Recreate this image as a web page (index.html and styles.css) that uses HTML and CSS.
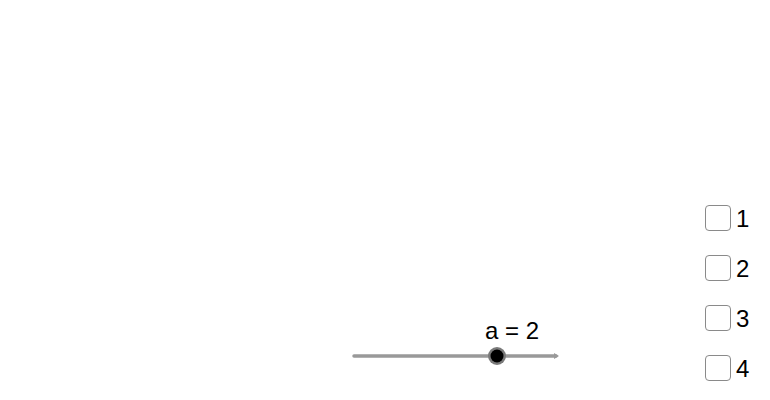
FILE: index.html
```html
<!DOCTYPE html>
<html>
<head>
<meta charset="utf-8">
<link rel="stylesheet" href="styles.css">
</head>
<body>
<div class="canvas">
  <div class="slider">
    <div class="slider-label">a = 2</div>
    <svg class="slider-track" width="220" height="20" viewBox="0 0 220 20">
      <line x1="2" y1="10" x2="204" y2="10" stroke="#999" stroke-width="3.5" stroke-linecap="round"/>
      <path d="M202 7 L207 10 L202 13 Z" fill="#999"/>
      <circle cx="145" cy="10" r="9" fill="#7a7a7a"/>
      <circle cx="145" cy="10" r="6.5" fill="#000"/>
    </svg>
  </div>
  <ul class="checks">
    <li class="check"><span class="box"></span><span class="lbl">1</span></li>
    <li class="check"><span class="box"></span><span class="lbl">2</span></li>
    <li class="check"><span class="box"></span><span class="lbl">3</span></li>
    <li class="check"><span class="box"></span><span class="lbl">4</span></li>
  </ul>
</div>
</body>
</html>
```
FILE: styles.css
```css
html, body {
  margin: 0;
  padding: 0;
  background: #fff;
}
.canvas {
  position: relative;
  width: 770px;
  height: 400px;
  overflow: hidden;
  font-family: "Liberation Sans", Arial, sans-serif;
  color: #000;
}
.slider {
  position: absolute;
  left: 352px;
  top: 318px;
  width: 220px;
}
.slider-label {
  font-size: 24px;
  line-height: 26px;
  margin-left: 133px;
}
.slider-track {
  display: block;
  margin-top: 2px;
}
.checks {
  position: absolute;
  left: 705px;
  top: 205px;
  margin: 0;
  padding: 0;
  list-style: none;
  display: flex;
  flex-direction: column;
  gap: 24px;
}
.check {
  display: flex;
  align-items: center;
  gap: 5px;
  height: 26px;
}
.box {
  width: 24px;
  height: 24px;
  border: 1px solid #8a8a8a;
  border-radius: 4px;
  box-sizing: content-box;
}
.lbl {
  font-size: 24px;
  line-height: 28px;
  padding-top: 1px;
}
```
